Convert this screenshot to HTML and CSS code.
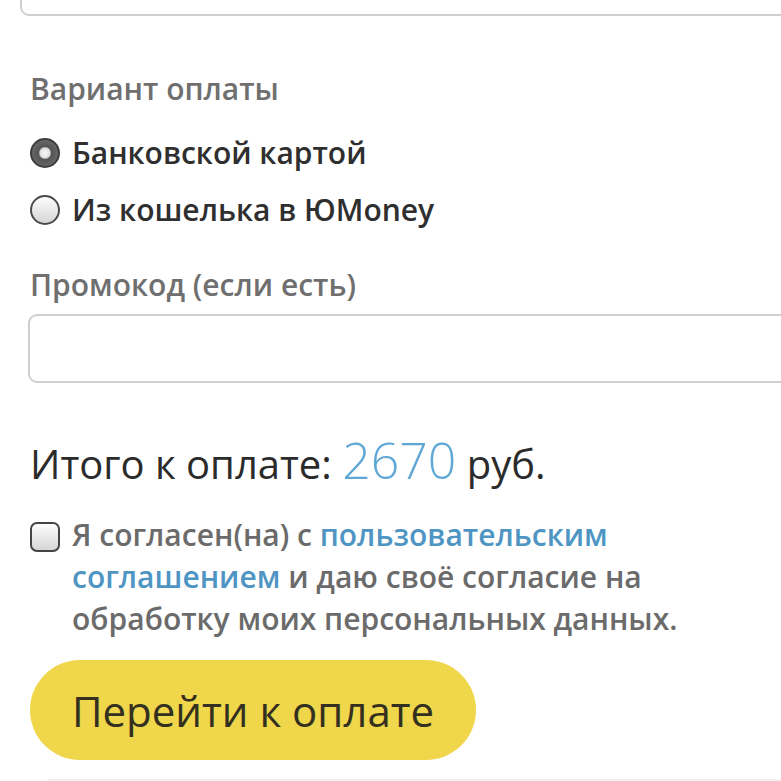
FILE: index.html
```html
<!DOCTYPE html>
<html lang="ru">
<head>
  <meta charset="UTF-8">
  <meta name="viewport" content="width=device-width, initial-scale=1.0">
  <title>Оплата</title>
  <link rel="stylesheet" href="styles.css">
</head>
<body>

<form class="pay-form">
  <div class="field-prev"></div>

  <div class="label">Вариант оплаты</div>
  <label class="option">
    <input type="radio" name="method" value="card" checked>
    <span>Банковской картой</span>
  </label>
  <label class="option">
    <input type="radio" name="method" value="yoomoney">
    <span>Из кошелька в ЮMoney</span>
  </label>

  <div class="label promo-label">Промокод (если есть)</div>
  <input type="text" class="promo" name="promo">

  <div class="total">Итого к оплате: <span class="sum">2670</span> руб.</div>

  <label class="agree">
    <input type="checkbox" name="agree">
    <span>Я согласен(на) с <a href="#">пользовательским соглашением</a> и даю своё согласие на обработку моих персональных данных.</span>
  </label>

  <button type="submit" class="pay-btn">Перейти к оплате</button>
  <div class="bottom-line"></div>
</form>

</body>
</html>
```

FILE: styles.css
```css
/* базовые стили */
body {
  margin: 0;
  padding: 0;
  background-color: #fff;
  font-family: 'Open Sans', sans-serif;
  overflow: hidden;
}
.pay-form {
  padding: 1px 0 0 30px;
  overflow: hidden;
}
.field-prev {
  height: 60px;
  margin: -49px -20px 0 -10px;
  border: 2px solid #cfcfcf;
  border-radius: 9px;
}
.label {
  margin-top: 53px;
  font-size: 30px;
  font-weight: 600;
  line-height: 40px;
  color: #6f6f6f;
}
.option {
  display: flex;
  align-items: center;
  gap: 12px;
  margin-top: 24px;
  font-size: 30px;
  font-weight: 600;
  line-height: 40px;
  color: #2f2f2f;
}
.option + .option {
  margin-top: 17px;
}
.option input {
  appearance: none;
  -webkit-appearance: none;
  flex: none;
  margin: 0;
  width: 30px;
  height: 30px;
  border-radius: 50%;
  border: 2px solid #4a4a4a;
  background: linear-gradient(#fdfdfd, #d6d6d6);
  box-sizing: border-box;
}
.option input:checked {
  background: radial-gradient(circle, #fafafa 0, #dedede 5px, #555 6.5px, #6c6c6c 15px);
  border-color: #3d3d3d;
}
.promo-label {
  margin-top: 35px;
}
.promo {
  display: block;
  box-sizing: border-box;
  width: calc(100% + 20px);
  height: 69px;
  margin: 9px -20px 0 -2px;
  border: 2px solid #cfcfcf;
  border-radius: 9px;
  background: #fff;
}
.total {
  margin-top: 51px;
  font-size: 40px;
  line-height: 60px;
  height: 60px;
  color: #2b2b2b;
}
.total .sum {
  font-size: 50px;
  font-weight: 300;
  line-height: 1;
  color: #5fa7d5;
}
.agree {
  display: flex;
  align-items: flex-start;
  gap: 12px;
  margin-top: 20px;
  font-size: 30px;
  font-weight: 600;
  line-height: 42px;
  color: #6b6b6b;
}
.agree input {
  appearance: none;
  -webkit-appearance: none;
  flex: none;
  margin: 8px 0 0;
  width: 30px;
  height: 30px;
  border-radius: 7px;
  border: 2px solid #444;
  background: linear-gradient(#fdfdfd, #d6d6d6);
  box-sizing: border-box;
}
.agree a {
  color: #4f95c3;
  text-decoration: none;
}
.pay-btn {
  display: block;
  margin-top: 20px;
  width: 446px;
  height: 100px;
  border: none;
  border-radius: 50px;
  background-color: #efd64a;
  font-family: 'Open Sans', sans-serif;
  font-size: 42px;
  color: #34301f;
  cursor: pointer;
}
.bottom-line {
  margin: 19px 0 0 18px;
  border-top: 2px solid #f3eef2;
}
```
